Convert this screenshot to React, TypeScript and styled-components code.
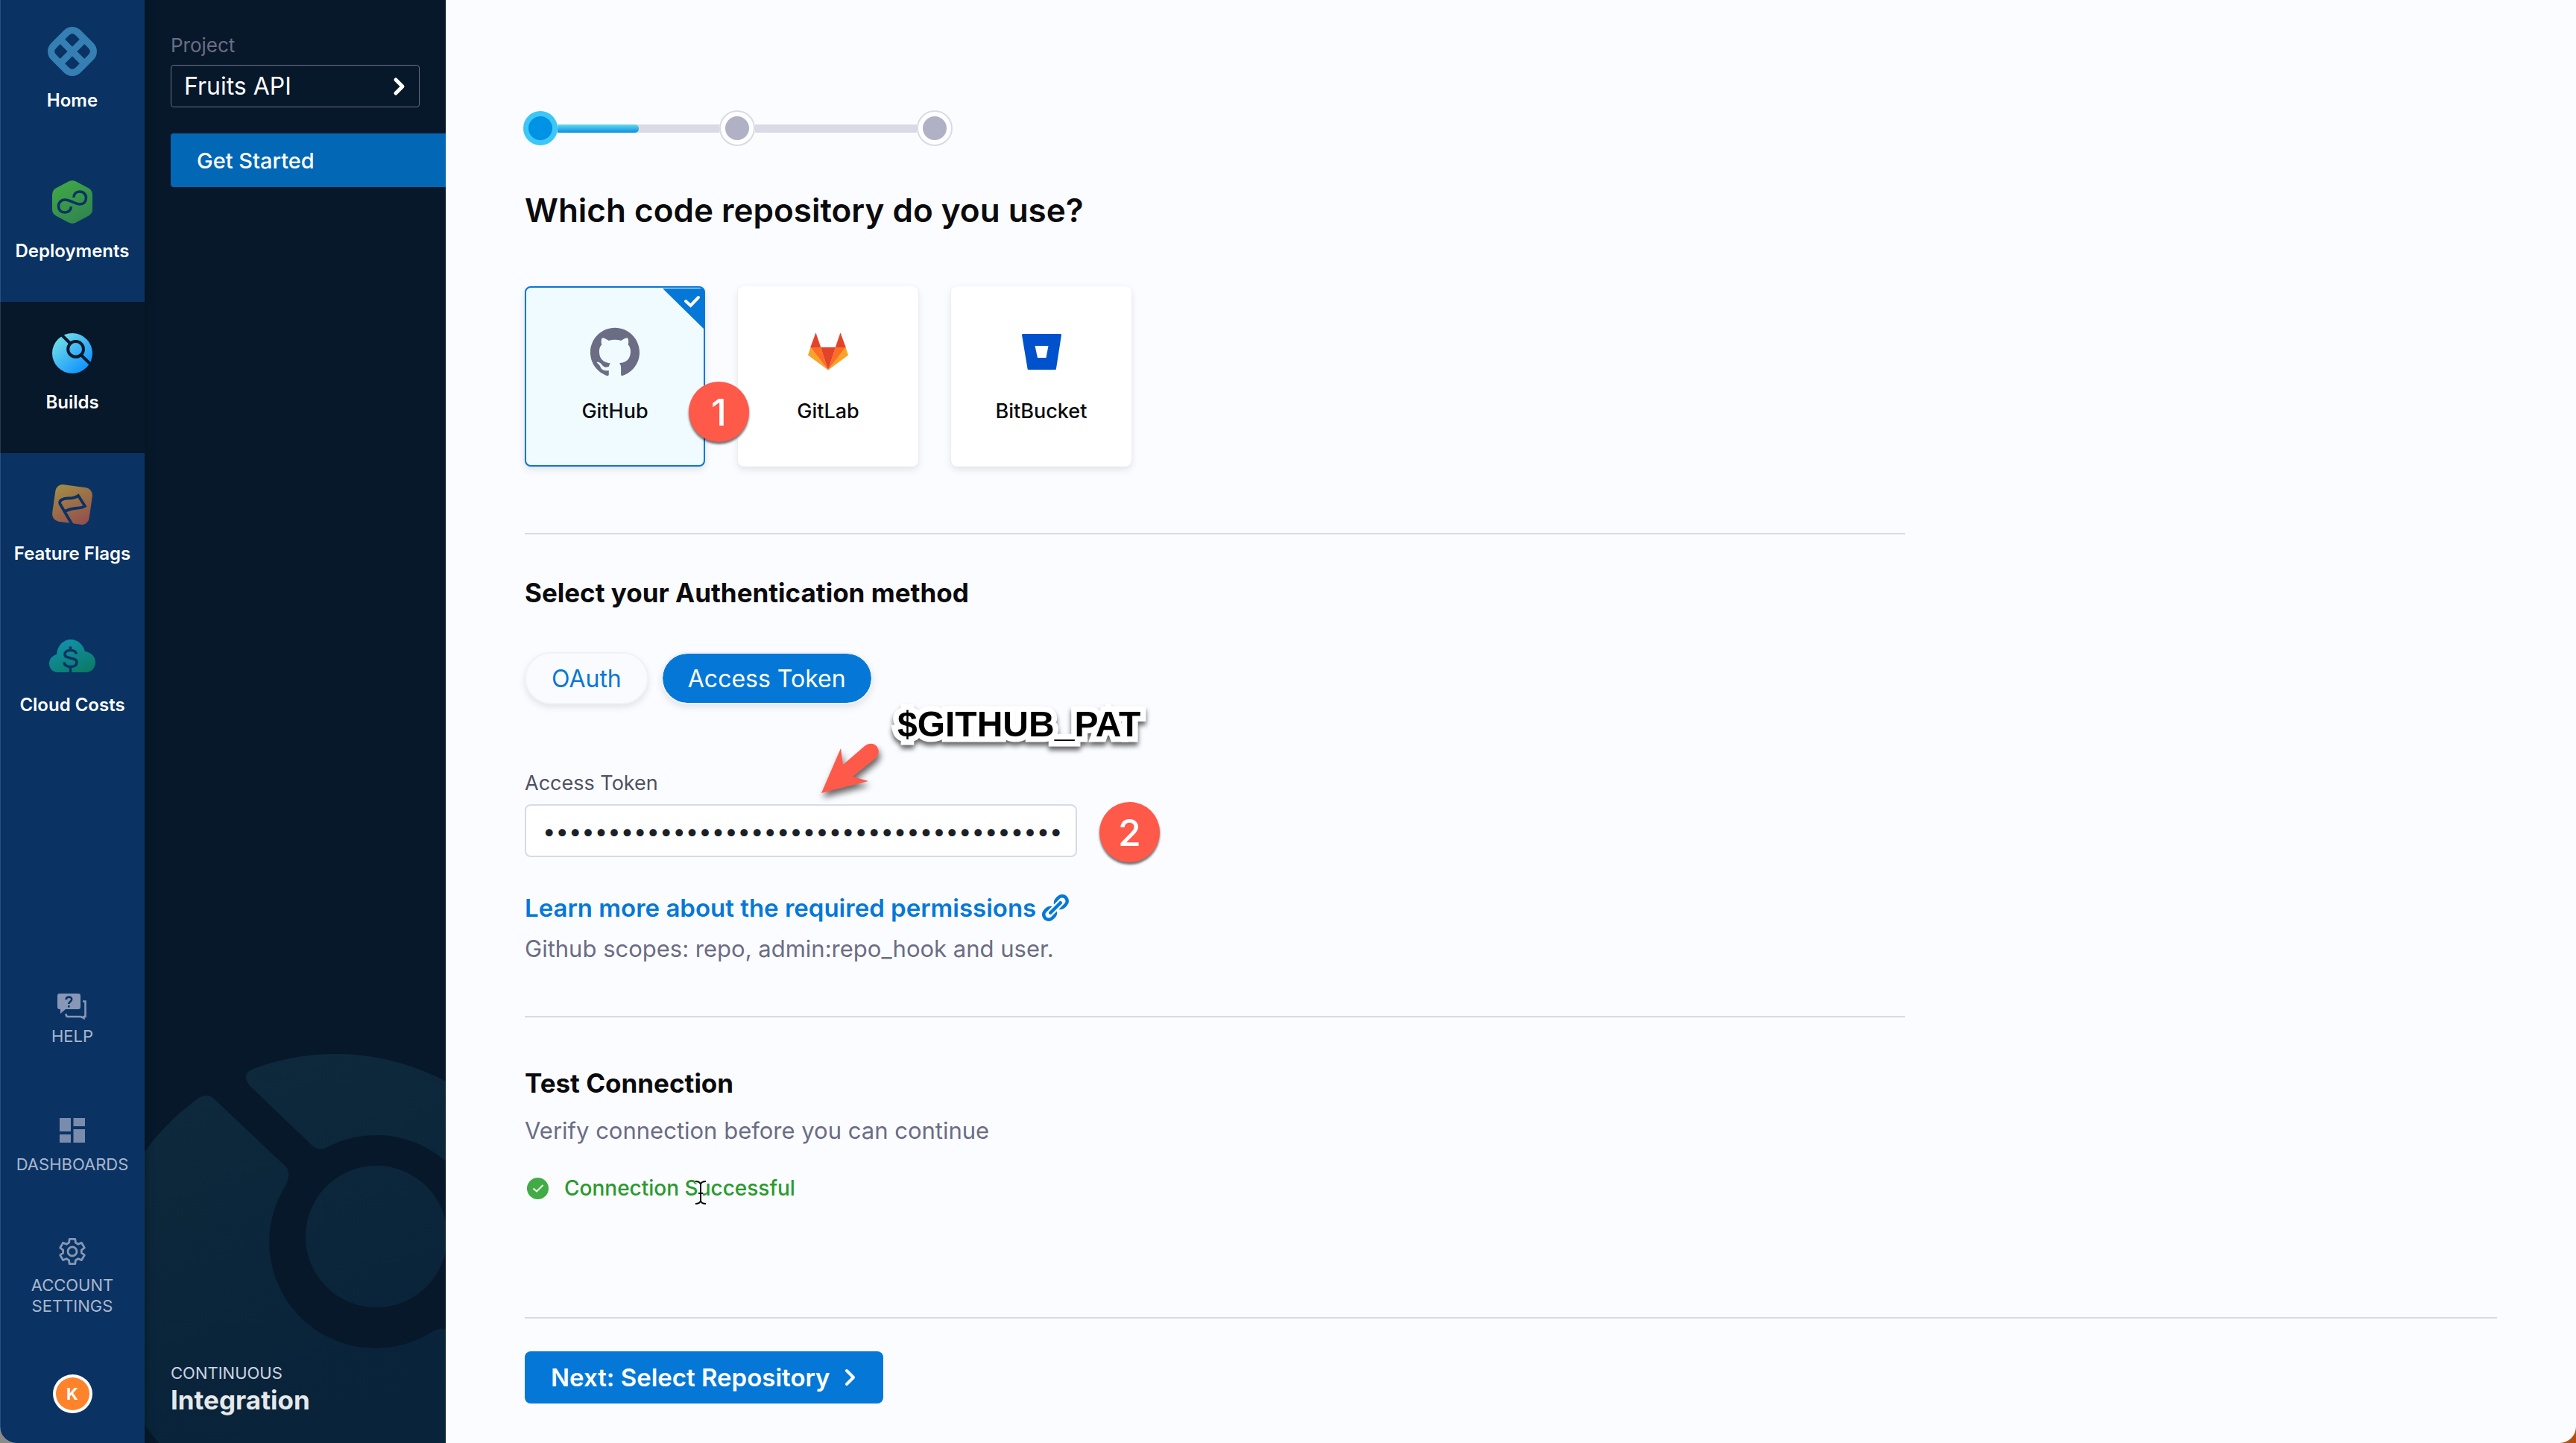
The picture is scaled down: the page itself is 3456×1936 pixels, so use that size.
import React, { useState } from 'react';
import styled, { createGlobalStyle, css } from 'styled-components';

const color = {
  rail: '#0a3364',
  ink: '#07182b',
  primary: '#0578d7',
  line: '#d9dae6',
  text: '#0b0b0d',
  muted: '#6b6d85',
  annotation: '#ff594a',
};

const GlobalStyle = createGlobalStyle`
  *, *::before, *::after { box-sizing: border-box; }
  body {
    margin: 0;
    background: linear-gradient(90deg, #8c8a87 0%, #8c8a87 50%, #b4500f 50%, #b4500f 100%);
    font-family: Inter, "Liberation Sans", sans-serif;
    color: ${color.text};
  }
  button, input { font: inherit; color: inherit; }
  h1, h2, p, ol, ul { margin: 0; padding: 0; }
  ol, ul { list-style: none; }
  svg { display: block; }
`;

const Window = styled.div`
  display: flex;
  min-height: 100vh;
  overflow: hidden;
  border-radius: 0 0 22px 22px;
  background: #fbfcff;
`;

/* ---------- module rail ---------- */

const Rail = styled.nav`
  position: relative;
  z-index: 1;
  flex: none;
  display: flex;
  flex-direction: column;
  justify-content: space-between;
  width: 194px;
  background: ${color.rail};
  box-shadow: 2px 0 8px rgba(3, 20, 24, 0.5);
  &::after {
    content: '';
    position: absolute;
    inset: 0 auto 0 0;
    width: 1px;
    background: rgba(255, 255, 255, 0.14);
  }
`;

const ModuleLink = styled.a<{ $active?: boolean }>`
  display: flex;
  flex-direction: column;
  align-items: center;
  gap: 18px;
  height: 203px;
  padding-top: 36px;
  color: #fff;
  font-size: 24px;
  font-weight: 600;
  line-height: 30px;
  text-decoration: none;
  background: ${(p) => (p.$active ? color.ink : 'transparent')};
  &:first-child { height: 202px; }
`;

const ModuleIcon = styled.span`
  display: flex;
  align-items: center;
  justify-content: center;
  height: 66px;
`;

const Utilities = styled.div`
  display: flex;
  flex-direction: column;
  align-items: center;
  padding-bottom: 40px;
`;

const UtilityLink = styled.a<{ $gap: number; $space: number }>`
  display: flex;
  flex-direction: column;
  align-items: center;
  gap: ${(p) => p.$gap}px;
  margin-bottom: ${(p) => p.$space}px;
  color: #abb6cc;
  font-size: 22px;
  line-height: 28px;
  text-align: center;
  text-decoration: none;
`;

const UtilityIcon = styled.span`
  display: flex;
  align-items: center;
  height: 40px;
  color: #8797b5;
`;

const Avatar = styled.button`
  width: 53px;
  height: 52px;
  padding: 0;
  border: 4px solid #fff;
  border-radius: 50%;
  background: #ff832b;
  color: #fff;
  font-size: 22px;
  font-weight: 700;
`;

/* ---------- project sidebar ---------- */

const Sidebar = styled.aside`
  position: relative;
  flex: none;
  display: flex;
  flex-direction: column;
  width: 404px;
  padding: 45px 0 36px 35px;
  overflow: hidden;
  background: ${color.ink};
`;

const Watermark = styled.svg`
  position: absolute;
  left: 0;
  bottom: 0;
`;

const SidebarLabel = styled.span`
  color: ${color.muted};
  font-size: 26px;
  line-height: 32px;
`;

const ProjectPicker = styled.button`
  display: flex;
  align-items: center;
  justify-content: space-between;
  height: 57px;
  margin: 10px 35px 35px 0;
  padding: 0 18px 0 17px;
  border: 1px solid #6b6d85;
  border-radius: 4px;
  background: transparent;
  color: #fff;
  font-size: 32px;
`;

const SidebarLink = styled.a`
  display: flex;
  align-items: center;
  height: 72px;
  padding-left: 35px;
  border-radius: 4px 0 0 4px;
  background: #0267b4;
  color: #fff;
  font-size: 29px;
  font-weight: 500;
  text-decoration: none;
`;

const ModuleTitle = styled.div`
  position: relative;
  margin-top: auto;
  color: #cdd3e2;
  font-size: 22px;
  line-height: 28px;
`;

const ModuleName = styled.div`
  color: #e6e8ea;
  font-size: 35px;
  font-weight: 700;
  line-height: 44px;
`;

/* ---------- main ---------- */

const Main = styled.main`
  flex: 1;
  display: flex;
  flex-direction: column;
  min-width: 0;
  padding: 148px 106px 53px;
`;

const Stepper = styled.ol`
  display: flex;
  align-items: center;
  height: 48px;
  margin: 0 0 60px -2px;
`;

const StepDot = styled.li<{ $active?: boolean }>`
  display: flex;
  align-items: center;
  justify-content: center;
  width: 48px;
  height: 48px;
  border: 2px solid ${color.line};
  border-radius: 50%;
  background: #fff;
  &::before {
    content: '';
    width: 32px;
    height: 32px;
    border-radius: 50%;
    background: #b0b1c5;
  }
  ${(p) =>
    p.$active &&
    css`
      width: 46px;
      height: 46px;
      border-color: #3dc7f6;
      background: #3dc7f6;
      &::before { background: #0092e4; }
    `}
`;

const StepLine = styled.li`
  width: 217px;
  height: 11px;
  background: ${color.line};
`;

const StepFill = styled.div`
  height: 100%;
  border-radius: 0 5px 5px 0;
  background: linear-gradient(#63dbe9, #0a8de4);
`;

const Title = styled.h1`
  margin-bottom: 76px;
  font-size: 44px;
  font-weight: 600;
  line-height: 52px;
`;

const SectionTitle = styled.h2`
  font-size: 35px;
  font-weight: 700;
  line-height: 44px;
`;

const Section = styled.section<{ $top: number; $bottom: number }>`
  position: relative;
  width: 70%;
  padding: ${(p) => p.$top}px 0 ${(p) => p.$bottom}px;
  border-bottom: 2px solid ${color.line};
  &:last-of-type { border-bottom: 0; }
`;

const Cards = styled.div`
  display: flex;
  gap: 44px;
`;

const CardSlot = styled.div`
  position: relative;
`;

const ProviderCard = styled.button<{ $selected: boolean }>`
  display: flex;
  flex-direction: column;
  align-items: center;
  gap: 31px;
  width: 242px;
  height: 242px;
  padding: 53px 0 0;
  border: 2px solid ${(p) => (p.$selected ? color.primary : 'transparent')};
  border-radius: 8px;
  background: ${(p) => (p.$selected ? '#effbff' : '#fff')};
  background-clip: ${(p) => (p.$selected ? 'padding-box' : 'border-box')};
  box-shadow: 0 0 2px rgba(40, 41, 61, 0.06), 0 4px 10px rgba(96, 97, 112, 0.16);
  font-size: 27px;
  font-weight: 500;
  line-height: 32px;
`;

const ProviderIcon = styled.span`
  display: flex;
  align-items: center;
  height: 66px;
`;

const Corner = styled.svg`
  position: absolute;
  top: 3px;
  right: 1px;
`;

const Badge = styled.span<{ $left: number; $top: number }>`
  position: absolute;
  z-index: 2;
  left: ${(p) => p.$left}px;
  top: ${(p) => p.$top}px;
  display: flex;
  align-items: center;
  justify-content: center;
  width: 81px;
  height: 81px;
  border-radius: 50%;
  background: ${color.annotation};
  box-shadow: 0 3px 3px rgba(0, 0, 0, 0.55);
  color: #fff;
  font-size: 50px;
  font-weight: 500;
`;

const Pills = styled.div`
  display: flex;
  gap: 17px;
  margin: 58px 0 90px;
`;

const Pill = styled.button<{ $selected: boolean }>`
  height: 70px;
  padding: 0 34px;
  border: 2px solid #f1f2f8;
  border-radius: 35px;
  background: ${(p) => (p.$selected ? color.primary : '#fafbfe')};
  background-clip: padding-box;
  box-shadow: 0 4px 8px rgba(96, 97, 112, 0.16);
  color: ${(p) => (p.$selected ? '#fff' : color.primary)};
  font-size: 32px;
`;

const FieldLabel = styled.label`
  display: block;
  margin-bottom: 12px;
  color: #4f5162;
  font-size: 27px;
  line-height: 32px;
`;

const Field = styled.div`
  position: relative;
  width: 741px;
  margin-bottom: 48px;
`;

const TokenInput = styled.input`
  display: block;
  width: 100%;
  height: 71px;
  padding: 0 20px 0 22px;
  border: 2px solid ${color.line};
  border-radius: 8px;
  background: #fff;
  color: #1b2127;
  font-size: 31px;
`;

const DocsLink = styled.a`
  display: inline-flex;
  align-items: center;
  gap: 8px;
  color: ${color.primary};
  font-size: 33px;
  font-weight: 600;
  line-height: 40px;
  text-decoration: none;
  vertical-align: top;
`;

const Hint = styled.p<{ $top: number }>`
  margin-top: ${(p) => p.$top}px;
  color: ${color.muted};
  font-size: 31px;
  line-height: 40px;
`;

const Callout = styled.span`
  position: absolute;
  left: 500px;
  top: 227px;
  font-family: "Liberation Sans", Arial, sans-serif;
  font-size: 48px;
  font-weight: 700;
  line-height: 56px;
  color: #000;
  paint-order: stroke fill;
  -webkit-text-stroke: 15px #fff;
  stroke-linejoin: round;
  filter: drop-shadow(0 5px 3px rgba(0, 0, 0, 0.6));
`;

const Arrow = styled.svg`
  position: absolute;
  z-index: 2;
  left: 390px;
  top: 272px;
  filter: drop-shadow(2px 6px 4px rgba(0, 0, 0, 0.6));
`;

const Status = styled.p`
  position: relative;
  display: flex;
  align-items: center;
  gap: 21px;
  width: max-content;
  margin-top: 39px;
  padding-left: 3px;
  color: #299b2c;
  font-size: 28px;
  font-weight: 500;
  line-height: 36px;
`;

const TextCursor = styled.svg`
  position: absolute;
  left: 227px;
  top: 7px;
`;

const Footer = styled.footer`
  margin-top: auto;
  padding-top: 44px;
  border-top: 2px solid ${color.line};
`;

const NextButton = styled.button`
  display: flex;
  align-items: center;
  gap: 18px;
  height: 70px;
  padding: 0 36px 0 35px;
  border: 0;
  border-radius: 8px;
  background: ${color.primary};
  color: #fff;
  font-size: 33px;
  font-weight: 600;
`;

/* ---------- drawings ---------- */

const Chevron = ({ width }: { width: number }) => (
  <svg width="17" height="26" viewBox="0 0 17 26" fill="none" stroke="currentColor" strokeWidth={width} strokeLinecap="round" strokeLinejoin="round" aria-hidden="true">
    <path d="M4 4l9 9-9 9" />
  </svg>
);

const HomeIcon = () => (
  <svg width="66" height="66" viewBox="-33 -33 66 66" aria-hidden="true">
    <g transform="rotate(45)">
      <rect x="-28" y="-28" width="56" height="56" rx="16" fill="#367fb2" />
      {[0, 90, 180, 270].map((turn) => (
        <path key={turn} transform={`rotate(${turn})`} d="M-5 -5H-18V-12Q-18 -18 -12 -18H-5Z" fill={color.rail} stroke={color.rail} strokeWidth="1" strokeLinejoin="round" />
      ))}
    </g>
  </svg>
);

const DeploymentsIcon = () => (
  <svg width="54" height="58" viewBox="0 0 54 58" fill="none" aria-hidden="true">
    <defs>
      <linearGradient id="cd" x1="0" y1="0" x2="0.6" y2="1">
        <stop stopColor="#42ab45" />
        <stop offset="1" stopColor="#31864f" />
      </linearGradient>
    </defs>
    <path d="M22 1.5Q27 -1 32 1.5L49 10.500Q54 13.500 54 19V39Q54 44.500 49 47.500L32 56.500Q27 59 22 56.500L5 47.500Q0 44.500 0 39V19Q0 13.500 5 10.500Z" fill="url(#cd)" />
    <path d="M29 23C29 18 32.500 15 37 15C42 15 45.500 19 45.500 23.500C45.500 28.500 42 32 37 32C31 32 24 26 17 26C12 26 8.500 30 8.500 34.500C8.500 39.500 12 43 17 43C22 43 25.500 39.500 25.500 35" stroke={color.rail} strokeWidth="3.600" />
  </svg>
);

const BuildsIcon = () => (
  <svg width="54" height="54" viewBox="0 0 54 54" fill="none" aria-hidden="true">
    <defs>
      <linearGradient id="ci" x1="0.1" y1="0.1" x2="0.85" y2="0.95">
        <stop stopColor="#73dfe7" />
        <stop offset="1" stopColor="#0a8fff" />
      </linearGradient>
    </defs>
    <circle cx="27" cy="27" r="27" fill="url(#ci)" />
    <g stroke={color.ink} strokeWidth="4">
      <circle cx="31.600" cy="21.400" r="10.400" />
      <path d="M12 1.500L24.500 14M38.500 29L53 43" />
    </g>
  </svg>
);

const FlagsIcon = () => (
  <svg width="58" height="58" viewBox="0 0 58 58" fill="none" aria-hidden="true">
    <defs>
      <linearGradient id="ff" x1="0.1" y1="0" x2="0.8" y2="1">
        <stop stopColor="#a38c45" />
        <stop offset="1" stopColor="#94504c" />
      </linearGradient>
    </defs>
    <rect x="4" y="4" width="50" height="50" rx="10" transform="rotate(8 29 29)" fill="url(#ff)" />
    <path d="M29.500 57L12.500 28C10.500 22.500 18 20.500 24 20.500C30 20.500 33 20 37 17L46 31C40 35.500 33 31.500 20 37.500" stroke={color.rail} strokeWidth="3.800" />
  </svg>
);

const CostsIcon = () => (
  <svg width="62" height="44" viewBox="0 0 62 44" fill="none" aria-hidden="true">
    <defs>
      <linearGradient id="ce" x1="0.2" y1="0" x2="0.8" y2="1">
        <stop stopColor="#1192ae" />
        <stop offset="1" stopColor="#0b7b65" />
      </linearGradient>
    </defs>
    <path d="M11 44C5 44 0 39 0 32.500C0 26 4 21.500 10 20C11 8 19 0 29 0C38 0 45.500 6.500 48 16C56 17 62 23 62 30C62 38 57 44 49 44Z" fill="url(#ce)" />
    <path d="M36.500 19.500C36 16 33 14.500 28.500 14.500C24 14.500 21 16.500 21 20C21 27 37 23 37 30.500C37 34.500 33.500 36.500 28.500 36.500C24 36.500 20.500 34.500 20 30.500M28.500 9.500V15M28.500 36.500V44" stroke={color.rail} strokeWidth="3.600" />
  </svg>
);

const HelpIcon = () => (
  <svg width="40" height="35" viewBox="0 0 40 35" fill="none" aria-hidden="true">
    <path d="M3 0H28Q31 0 31 3V18Q31 21 28 21H11L4 27V21H3Q0 21 0 18V3Q0 0 3 0Z" fill="currentColor" />
    <path d="M11.500 8C12 3.500 19.500 3.500 19.200 8C19 10.500 15.300 11 15.300 14M15.300 16V18.500" stroke={color.rail} strokeWidth="2.600" />
    <path d="M34 10.500H37.500V31H35.500V33L31.500 31H14Q11.500 31 11.500 27" stroke="currentColor" strokeWidth="2.600" />
  </svg>
);

const DashboardsIcon = () => (
  <svg width="34" height="34" viewBox="0 0 34 34" fill="#7a8cac" aria-hidden="true">
    <path d="M0 0H15V18H0ZM0 22H15V33H0ZM18.500 0H34V11H18.500ZM18.500 15H34V33H18.500Z" />
  </svg>
);

const gearOutline = Array.from({ length: 6 }, (_, i) => i * 60)
  .flatMap((a) => [[a - 21, 12.5], [a - 13, 17], [a + 13, 17], [a + 21, 12.5]])
  .map(([a, r]) => {
    const t = ((a - 90) * Math.PI) / 180;
    return `${(r * Math.cos(t)).toFixed(2)},${(r * Math.sin(t)).toFixed(2)}`;
  })
  .join(' ');

const GearIcon = () => (
  <svg width="38" height="40" viewBox="-19 -20 38 40" fill="none" stroke="currentColor" strokeWidth="2.800" strokeLinejoin="round" aria-hidden="true">
    <polygon points={gearOutline} />
    <circle r="6" />
  </svg>
);

const GitHubIcon = () => (
  <svg width="66" height="66" viewBox="0 0 24 24" fill={color.muted} aria-hidden="true">
    <path d="M12 .297c-6.630 0-12 5.373-12 12 0 5.303 3.438 9.800 8.205 11.385.6.113.82-.258.82-.577 0-.285-.010-1.040-.015-2.040-3.338.724-4.042-1.610-4.042-1.610C4.422 18.070 3.633 17.700 3.633 17.700c-1.087-.744.084-.729.084-.729 1.205.084 1.838 1.236 1.838 1.236 1.070 1.835 2.809 1.305 3.495.998.108-.776.417-1.305.760-1.605-2.665-.300-5.466-1.332-5.466-5.930 0-1.310.465-2.380 1.235-3.220-.135-.303-.540-1.523.105-3.176 0 0 1.005-.322 3.300 1.230.960-.267 1.980-.399 3-.405 1.020.006 2.040.138 3 .405 2.280-1.552 3.285-1.230 3.285-1.230.645 1.653.240 2.873.120 3.176.765.840 1.230 1.910 1.230 3.220 0 4.610-2.805 5.625-5.475 5.920.420.360.810 1.096.810 2.220 0 1.606-.015 2.896-.015 3.286 0 .315.210.690.825.570C20.565 22.092 24 17.592 24 12.297c0-6.627-5.373-12-12-12" />
  </svg>
);

const GitLabIcon = () => (
  <svg width="54" height="50" viewBox="0 0 54 50" aria-hidden="true">
    <path d="M10.500 0L17 19H3.500ZM43.500 0L50.500 19H37Z" fill="#e24329" stroke="#e24329" strokeWidth="0.500" strokeLinejoin="round" />
    <path d="M3.500 19L0 29.500L27 49.500ZM50.500 19L54 29.500L27 49.500Z" fill="#fca326" />
    <path d="M3.500 19H17L27 49.500ZM50.500 19H37L27 49.500Z" fill="#fc6d26" />
    <path d="M17 19H37L27 49.500Z" fill="#e24329" />
  </svg>
);

const BitBucketIcon = () => (
  <svg width="53" height="48" viewBox="0 0 53 48" aria-hidden="true">
    <path fillRule="evenodd" d="M1 0H52Q53 0 53 1.500L46 46.500Q46 48 44.500 48H9Q7.500 48 7.500 46.500L0 1.500Q0 0 1 0ZM17.500 16L21 32H32.500L35.500 16Z" fill="#0052cc" />
  </svg>
);

const LinkIcon = () => (
  <svg width="36" height="36" viewBox="0 0 16 16" fill="currentColor" aria-hidden="true">
    <path d="M4.990 11.990c.28 0 .53-.11.71-.29l6-6a1.003 1.003 0 00-1.420-1.420l-6 6c-.18.18-.29.43-.29.71 0 .55.45 1 1 1zm3.850-2.020L6.400 12.410l-1 1-.010-.010c-.36.36-.85.6-1.400.6-1.100 0-2-.9-2-2 0-.55.24-1.040.6-1.400l-.010-.010 1-1 2.440-2.440c-.33-.1-.67-.16-1.030-.16-1.100 0-2.090.46-2.810 1.190l-.020-.020-1 1 .020.020c-.73.72-1.190 1.710-1.190 2.810 0 2.210 1.790 4 4 4 1.100 0 2.090-.46 2.810-1.190l.020.020 1-1-.020-.020c.73-.72 1.190-1.710 1.190-2.810 0-.35-.06-.69-.15-1.020zm7.150-5.980c0-2.210-1.790-4-4-4-1.100 0-2.090.46-2.810 1.190l-.020-.020-1 1 .020.020c-.72.72-1.190 1.710-1.190 2.810 0 .35.06.69.15 1.020l2.440-2.440 1-1 .010.010c.36-.36.85-.6 1.400-.6 1.100 0 2 .9 2 2 0 .55-.24 1.040-.6 1.400l.010.010-1 1-2.430 2.450c.33.09.67.15 1.020.15 1.100 0 2.090-.46 2.810-1.190l.020.020 1-1-.020-.020a3.920 3.920 0 001.190-2.810z" />
  </svg>
);

const CheckCircle = () => (
  <svg width="29" height="29" viewBox="0 0 29 29" fill="none" aria-hidden="true">
    <circle cx="14.500" cy="14.500" r="14.500" fill="#42ab45" />
    <path d="M8.500 14.500L13 18.500L21.500 10" stroke="#fff" strokeWidth="2" />
  </svg>
);

const modules = [
  { name: 'Home', icon: <HomeIcon /> },
  { name: 'Deployments', icon: <DeploymentsIcon /> },
  { name: 'Builds', icon: <BuildsIcon />, active: true },
  { name: 'Feature Flags', icon: <FlagsIcon /> },
  { name: 'Cloud Costs', icon: <CostsIcon /> },
];

const providers = [
  { name: 'GitHub', icon: <GitHubIcon /> },
  { name: 'GitLab', icon: <GitLabIcon /> },
  { name: 'BitBucket', icon: <BitBucketIcon /> },
];

const methods = ['OAuth', 'Access Token'];

export default function App() {
  const [provider, setProvider] = useState('GitHub');
  const [method, setMethod] = useState('Access Token');
  const [token, setToken] = useState('ghp_'.padEnd(40, 'x'));
  const answered = [provider, method].filter(Boolean).length;
  const progress = answered / 4;

  return (
    <>
      <GlobalStyle />
      <Window>
        <Rail>
          <div>
            {modules.map((m) => (
              <ModuleLink key={m.name} href="#" $active={m.active}>
                <ModuleIcon>{m.icon}</ModuleIcon>
                {m.name}
              </ModuleLink>
            ))}
          </div>
          <Utilities>
            <UtilityLink href="#" $gap={6} $space={93}>
              <UtilityIcon><HelpIcon /></UtilityIcon>
              HELP
            </UtilityLink>
            <UtilityLink href="#" $gap={11} $space={83}>
              <UtilityIcon><DashboardsIcon /></UtilityIcon>
              DASHBOARDS
            </UtilityLink>
            <UtilityLink href="#" $gap={11} $space={78}>
              <UtilityIcon><GearIcon /></UtilityIcon>
              <span>ACCOUNT<br />SETTINGS</span>
            </UtilityLink>
            <Avatar>K</Avatar>
          </Utilities>
        </Rail>

        <Sidebar>
          <Watermark width="404" height="522" viewBox="194 1414 404 522" aria-hidden="true">
            <defs>
              <linearGradient id="mark" x1="300" y1="1440" x2="480" y2="1936" gradientUnits="userSpaceOnUse">
                <stop stopColor="#0e293b" />
                <stop offset="1" stopColor="#08233a" />
              </linearGradient>
            </defs>
            <g fill="url(#mark)">
              <path d="M267 1473Q279 1465 289 1476L383 1565Q391 1572 384 1589A142.500 142.500 0 0 0 578 1788Q590 1780 600 1784V2002A313 313 0 0 1 267 1473Z" />
              <path d="M340 1434A313 313 0 0 1 600 1452V1559.500A142.500 142.500 0 0 0 438 1539.500Q427 1545 419 1537L336 1457.500Q322 1441 340 1434Z" />
              <circle cx="505" cy="1659" r="95" />
            </g>
          </Watermark>
          <SidebarLabel>Project</SidebarLabel>
          <ProjectPicker>
            Fruits API
            <Chevron width={5} />
          </ProjectPicker>
          <SidebarLink href="#">Get Started</SidebarLink>
          <ModuleTitle>
            CONTINUOUS
            <ModuleName>Integration</ModuleName>
          </ModuleTitle>
        </Sidebar>

        <Main>
          <Stepper aria-label="Setup progress">
            <StepDot $active />
            <StepLine aria-hidden="true"><StepFill style={{ width: `${progress * 100}%` }} /></StepLine>
            <StepDot />
            <StepLine aria-hidden="true" />
            <StepDot />
          </Stepper>

          <Title>Which code repository do you use?</Title>
          <Section $top={0} $bottom={89}>
            <Cards>
              {providers.map((p) => (
                <CardSlot key={p.name}>
                  <ProviderCard $selected={p.name === provider} aria-pressed={p.name === provider} onClick={() => setProvider(p.name)}>
                    <ProviderIcon>{p.icon}</ProviderIcon>
                    {p.name}
                  </ProviderCard>
                  {p.name === provider && (
                    <Corner width="56" height="55" viewBox="0 0 56 55" fill="none" aria-hidden="true">
                      <path d="M0 0H52Q56 1 56 5V55Z" fill={color.primary} />
                      <path d="M31 17L37.500 23L48 12" stroke="#fff" strokeWidth="4" strokeLinecap="round" />
                    </Corner>
                  )}
                  {p.name === 'GitHub' && <Badge $left={220} $top={128}>1</Badge>}
                </CardSlot>
              ))}
            </Cards>
          </Section>

          <Section $top={56} $bottom={70}>
            <SectionTitle>Select your Authentication method</SectionTitle>
            <Pills>
              {methods.map((m) => (
                <Pill key={m} $selected={m === method} aria-pressed={m === method} onClick={() => setMethod(m)}>{m}</Pill>
              ))}
            </Pills>
            <Callout>$GITHUB_PAT</Callout>
            <Arrow width="90" height="80" viewBox="0 0 90 80" fill={color.annotation} aria-hidden="true">
              <path d="M8 75L34 15L37 37L66 12C79 2 92 18 80 29L50 53L71 59Z" />
            </Arrow>
            <FieldLabel htmlFor="token">Access Token</FieldLabel>
            <Field>
              <TokenInput id="token" type="password" value={token} onChange={(e) => setToken(e.target.value)} />
              <Badge $left={771} $top={-3}>2</Badge>
            </Field>
            <DocsLink href="#">
              Learn more about the required permissions
              <LinkIcon />
            </DocsLink>
            <Hint $top={15}>Github scopes: repo, admin:repo_hook and user.</Hint>
          </Section>

          <Section $top={66} $bottom={0}>
            <SectionTitle>Test Connection</SectionTitle>
            <Hint $top={22}>Verify connection before you can continue</Hint>
            <Status>
              <CheckCircle />
              Connection Successful
              <TextCursor width="18" height="34" viewBox="0 0 18 34" fill="none" aria-hidden="true">
                <path d="M2 2Q8 2 9 6Q10 2 16 2M9 6V28M2 32Q8 32 9 28Q10 32 16 32M6 18H12" stroke="#fff" strokeWidth="5" />
                <path d="M2 2Q8 2 9 6Q10 2 16 2M9 6V28M2 32Q8 32 9 28Q10 32 16 32M6 18H12" stroke="#000" strokeWidth="2" />
              </TextCursor>
            </Status>
          </Section>

          <Footer>
            <NextButton>
              Next: Select Repository
              <Chevron width={4} />
            </NextButton>
          </Footer>
        </Main>
      </Window>
    </>
  );
}
